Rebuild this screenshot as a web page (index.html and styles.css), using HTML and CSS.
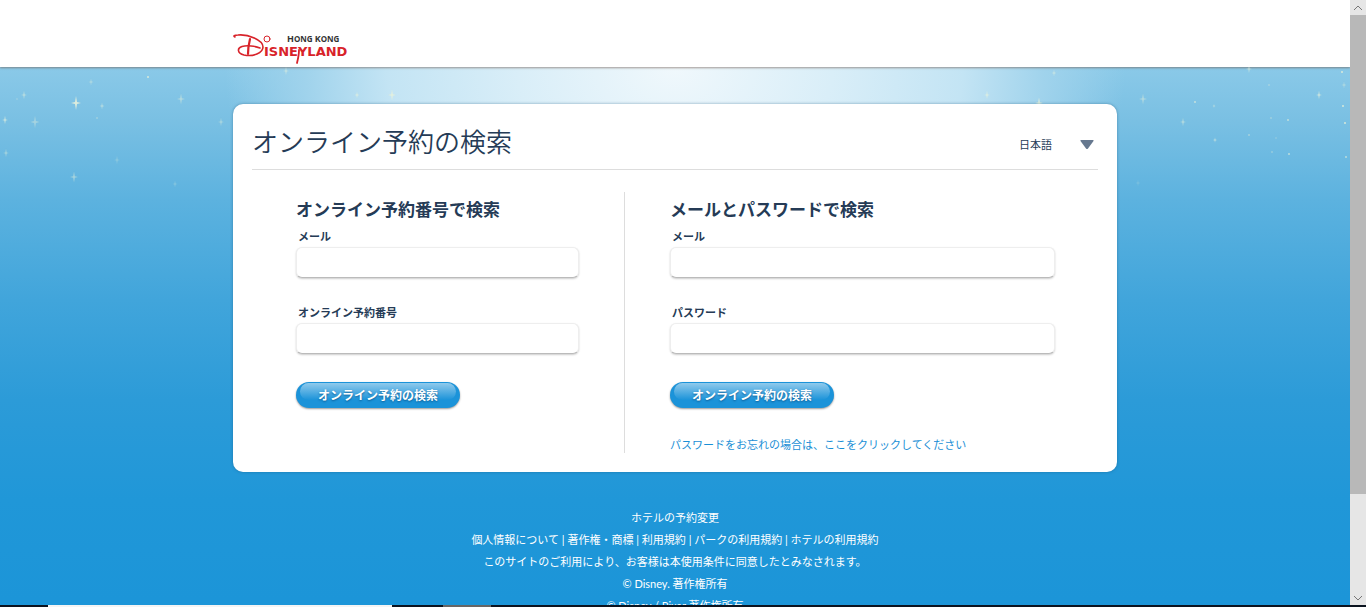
FILE: index.html
```html
<!DOCTYPE html>
<html lang="ja">
<head>
<meta charset="utf-8">
<title>オンライン予約の検索</title>
<link rel="stylesheet" href="styles.css">
</head>
<body>
<div class="window">
  <div class="viewport">
    <div class="page">
      <header class="site-header">
        <div class="header-inner">
          <a class="logo" href="#" aria-label="Hong Kong Disneyland">
            <svg width="116" height="34" viewBox="0 0 116 34">
              <text class="logo-top" x="54" y="11"><tspan class="logo-cap">H</tspan>ONG <tspan class="logo-cap">K</tspan>ONG</text>
              <text class="logo-main" x="31" y="25">ISNEYLAND</text>
              <g fill="none" stroke="#d8232a" stroke-linecap="round" stroke-linejoin="round">
                <path stroke-width="1.6" d="M2 6C0 5 1 4 5 4C15 3 30 9 30 16C30 22 20 26 11 24C4 22 4 17 9 15.500C14 14 22 15 27 17"/>
                <path stroke-width="2.2" d="M17 8C16 12 15 18 15 23"/>
                <circle stroke-width="1" cx="34" cy="8" r="3"/>
                <path stroke-width="1.8" d="M66 19C66 24 65 28 64 32"/>
              </g>
            </svg>
          </a>
        </div>
      </header>
      <svg class="stars" aria-hidden="true">
        <defs>
          <path id="star" d="M0-7L1-1L5 0L1 1L0 7L-1 1L-5 0L-1-1Z"/>
        </defs>
        <g fill="#e6f1dc">
          <use href="#star" opacity=".9" transform="translate(76 36)"/>
          <use href="#star" opacity=".6" transform="translate(24 28) scale(.6)"/>
          <use href="#star" opacity=".8" transform="translate(5 53) scale(.6)"/>
          <use href="#star" opacity=".4" transform="translate(35 55) scale(.9)"/>
          <use href="#star" opacity=".5" transform="translate(6 86) scale(.6)"/>
          <use href="#star" opacity=".5" transform="translate(74 110) scale(.8)"/>
          <use href="#star" opacity=".5" transform="translate(91 15) scale(.5)"/>
          <use href="#star" opacity=".6" transform="translate(102 39) scale(.5)"/>
          <use href="#star" opacity=".5" transform="translate(181 32) scale(.8)"/>
          <use href="#star" opacity=".5" transform="translate(221 55) scale(.6)"/>
          <use href="#star" opacity=".3" transform="translate(117 93) scale(.6)"/>
          <use href="#star" opacity=".3" transform="translate(175 117) scale(.5)"/>
          <use href="#star" opacity=".6" transform="translate(286 4) scale(.6)"/>
          <use href="#star" opacity=".8" transform="translate(357 28) scale(.5)"/>
          <use href="#star" opacity=".9" transform="translate(392 28) scale(.8)"/>
          <use href="#star" opacity=".8" transform="translate(987 28) scale(.6)"/>
          <use href="#star" opacity=".9" transform="translate(1039 36) scale(.8)"/>
          <use href="#star" opacity=".6" transform="translate(1054 6) scale(.5)"/>
          <use href="#star" opacity=".5" transform="translate(1143 32) scale(.8)"/>
          <use href="#star" opacity=".6" transform="translate(1183 55) scale(.6)"/>
          <use href="#star" opacity=".8" transform="translate(1214 39) scale(.3)"/>
          <use href="#star" opacity=".7" transform="translate(1215 73) scale(.4)"/>
          <use href="#star" opacity=".6" transform="translate(1249 2) scale(.6)"/>
          <use href="#star" opacity=".8" transform="translate(1319 28) scale(.6)"/>
          <use href="#star" opacity=".5" transform="translate(1344 18) scale(.5)"/>
          <use href="#star" opacity=".2" transform="translate(1138 116) scale(.5)"/>
        </g>
        <g fill="#eef3d8">
          <circle cx="148" cy="10" r="1" opacity=".8"/>
          <circle cx="17" cy="32" r="1" opacity=".2"/>
          <circle cx="97" cy="51" r="1" opacity=".3"/>
          <circle cx="1195" cy="35" r="1" opacity=".6"/>
          <circle cx="1269" cy="18" r="1" opacity=".3"/>
          <circle cx="1288" cy="53" r="1" opacity=".6"/>
          <circle cx="1271" cy="51" r="1" opacity=".3"/>
          <circle cx="1289" cy="87" r="1" opacity=".6"/>
          <circle cx="1272" cy="85" r="1" opacity=".3"/>
          <circle cx="1249" cy="68" r="1" opacity=".4"/>
          <circle cx="1276" cy="71" r="1" opacity=".2"/>
          <circle cx="1342" cy="5" r="1" opacity=".8"/>
          <circle cx="1343" cy="39" r="1" opacity=".8"/>
          <circle cx="1345" cy="56" r="1" opacity=".8"/>
          <circle cx="1346" cy="90" r="1" opacity=".6"/>
        </g>
      </svg>
      <main class="card">
        <div class="card-head">
          <h1>オンライン予約の検索</h1>
          <div class="language">
            <select aria-label="言語"><option>日本語</option></select>
            <svg width="14" height="9" viewBox="0 0 14 9" aria-hidden="true"><path d="M1 0H13Q14 0 13.500 1L8 8.500Q7 9.500 6 8.500L.5 1Q0 0 1 0Z" fill="#66788f"/></svg>
          </div>
        </div>
        <div class="forms">
          <form class="form form-number">
            <h2>オンライン予約番号で検索</h2>
            <label for="mail1">メール</label>
            <input id="mail1" type="text">
            <label for="number">オンライン予約番号</label>
            <input id="number" type="text">
            <button type="button">オンライン予約の検索</button>
          </form>
          <form class="form form-account">
            <h2>メールとパスワードで検索</h2>
            <label for="mail2">メール</label>
            <input id="mail2" type="text">
            <label for="password">パスワード</label>
            <input id="password" type="password">
            <button type="button">オンライン予約の検索</button>
            <a class="forgot" href="#">パスワードをお忘れの場合は、ここをクリックしてください</a>
          </form>
        </div>
      </main>
      <footer class="footer">
        <p><a href="#">ホテルの予約変更</a></p>
        <p><a href="#">個人情報について</a> | <a href="#">著作権・商標</a> | <a href="#">利用規約</a> | <a href="#">パークの利用規約</a> | <a href="#">ホテルの利用規約</a></p>
        <p>このサイトのご利用により、お客様は本使用条件に同意したとみなされます。</p>
        <p>© Disney. 著作権所有</p>
        <p>© Disney / Pixar 著作権所有</p>
      </footer>
    </div>
    <div class="scrollbar">
      <button type="button" class="scroll-arrow" aria-label="上へ"><svg width="10" height="6" viewBox="0 0 10 6"><path d="M1 5L5 1L9 5"/></svg></button>
      <div class="scroll-thumb"></div>
      <div class="scroll-rest"></div>
      <button type="button" class="scroll-arrow" aria-label="下へ"><svg width="10" height="6" viewBox="0 0 10 6"><path d="M1 1L5 5L9 1"/></svg></button>
    </div>
  </div>
  <div class="taskbar"><span class="task-search"></span><span class="task-item"></span></div>
</div>
</body>
</html>
```
FILE: styles.css
```css
* { box-sizing: border-box; }

body {
  margin: 0;
  color: #253b56;
  font-family: Lato, "Noto Sans CJK JP", sans-serif;
  font-size: 11px;
}

h1, h2, p { margin: 0; }

.window {
  display: flex;
  flex-direction: column;
  height: 100vh;
  overflow: hidden;
}

.viewport {
  display: flex;
  flex: 1;
  min-height: 0;
}

.page {
  position: relative;
  flex: 1;
  min-width: 0;
  overflow: hidden;
  background:
    radial-gradient(ellipse 450px 320px at 50% 68px, #f0f8fc 0%, #d9eef8 35%, #c3e4f4 64%, #a0d3ec 82%, rgba(138, 200, 230, 0) 100%) no-repeat,
    linear-gradient(#8ac9e8 68px, #7ac0e3 120px, #5cb2df 200px, #41a5db 300px, #2c9bd8 400px, #2097d8 500px, #1c95d8 600px);
}

.site-header {
  position: relative;
  height: 67px;
  background: #fff;
  box-shadow: 0 1px 2px rgba(110, 90, 80, .6);
}

.header-inner,
.card {
  width: 884px;
  max-width: 100%;
  margin: 0 auto;
}

.header-inner { padding-top: 31px; }

.logo, .logo svg { display: block; }
.logo { width: 116px; }

.logo-top {
  font: bold 8px "Open Sans", sans-serif;
  fill: #333;
}

.logo-cap { font-size: 9px; }

.logo-main {
  font: bold 13px "DejaVu Sans", sans-serif;
  fill: #d8232a;
}

.stars {
  position: absolute;
  top: 67px;
  left: 0;
  width: 100%;
  height: 140px;
}

.card {
  position: relative;
  margin-top: 37px;
  padding: 0 19px 19px;
  background: #fff;
  border-radius: 10px;
  box-shadow: 0 0 3px rgba(20, 80, 120, .5);
}

.card-head {
  display: flex;
  align-items: center;
  justify-content: space-between;
  height: 66px;
  padding-top: 10px;
  border-bottom: 1px solid #ddd;
}

h1 {
  font-size: 26px;
  font-weight: 350;
  line-height: 36px;
}

.language {
  display: flex;
  align-items: center;
  gap: 4px;
  padding: 6px 4px 0 0;
}

.language select {
  width: 57px;
  padding: 0;
  border: 0;
  color: inherit;
  background: none;
  font: inherit;
  appearance: none;
}

.forms {
  display: grid;
  grid-template-columns: 373fr 473fr;
  margin-top: 22px;
}

.form {
  display: flex;
  flex-direction: column;
  align-items: flex-start;
}

.form-number {
  padding: 0 45px 0 44px;
  border-right: 1px solid #ddd;
}

.form-account { padding: 0 43px 0 45px; }

h2 {
  font-size: 17px;
  line-height: 35px;
}

label {
  padding-left: 2px;
  font-weight: bold;
  line-height: 20px;
}

input {
  width: 100%;
  height: 31px;
  padding: 0 8px;
  border: 1px solid #eee;
  border-bottom-color: #bbb;
  border-radius: 6px;
  background: #fff;
  box-shadow: 0 1px 2px rgba(0, 0, 0, .2);
  font: inherit;
}

input + label { margin-top: 25px; }

.form button {
  position: relative;
  height: 26px;
  margin-top: 28px;
  padding: 0 22px 1px;
  border: 0;
  border-radius: 13px;
  color: #fff;
  background: #1b93d9;
  box-shadow: 0 1px 2px rgba(0, 0, 0, .4);
  font: bold 12px Lato, "Noto Sans CJK JP", sans-serif;
  text-shadow: 0 1px 2px #0c5d95;
  isolation: isolate;
}

.form button::before {
  content: "";
  position: absolute;
  z-index: -1;
  inset: 1px 4px 8px;
  border-radius: 10px;
  background: linear-gradient(#90caec, #1b93d9);
}

.forgot {
  margin-top: 29px;
  color: #1b8fd6;
  line-height: 16px;
  text-decoration: none;
}

.footer {
  position: relative;
  margin-top: 35px;
  color: #fff;
  line-height: 22px;
  text-align: center;
  white-space: nowrap;
}

.footer a {
  color: inherit;
  text-decoration: none;
}

.scrollbar {
  display: flex;
  flex-direction: column;
  width: 16px;
  background: #e6e6e6;
}

.scroll-arrow {
  display: flex;
  align-items: center;
  justify-content: center;
  height: 15px;
  padding: 0;
  border: 0;
  background: none;
}

.scroll-arrow path {
  fill: none;
  stroke: #777;
  stroke-width: 1;
}

.scroll-thumb {
  flex: 5;
  background: #b8b8b8;
}

.scroll-rest { flex: 1; }

.taskbar {
  display: flex;
  gap: 51px;
  height: 2px;
  padding-left: 48px;
  background: #0c1420;
}

.task-search { width: 344px; background: #f4f4f4; }
.task-item { width: 48px; background: #666; }
```
